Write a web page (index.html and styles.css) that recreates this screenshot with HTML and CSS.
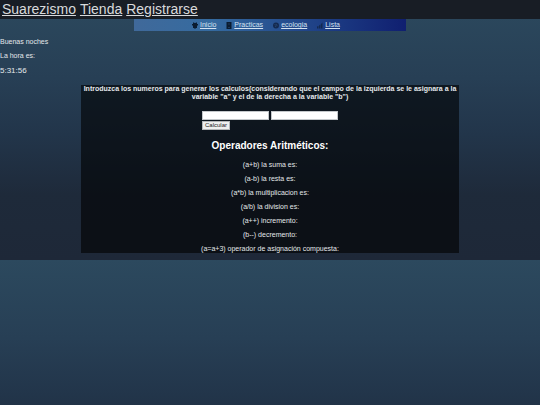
FILE: index.html
```html
<!DOCTYPE html>
<html lang="es">
<head>
  <meta charset="UTF-8">
  <meta name="viewport" content="width=device-width, initial-scale=1.0">
  <title>Operadores</title>
  <link rel="stylesheet" href="styles.css">
</head>
<body>
  <header class="barra">
    <a href="#">Suarezismo</a>
    <a href="#">Tienda</a>
    <a href="#">Registrarse</a>
  </header>

  <nav class="menu">
    <div class="menu-item">
      <svg class="icono" viewBox="0 0 12 14"><path d="M2 1h2l1 1h2l1-1h2v3h2v3h-2v5H8v1H4v-1H2V7H0V4h2z"/></svg>
      <a href="#">Inicio</a>
    </div>
    <div class="menu-item">
      <svg class="icono" viewBox="0 0 12 14"><path d="M1 0h10v14H1z"/><path class="linea" d="M4 4h4M4 11h4"/></svg>
      <a href="#">Practicas</a>
    </div>
    <div class="menu-item">
      <svg class="icono suave" viewBox="0 0 12 14"><circle cx="6" cy="7" r="6"/><path class="linea" d="M3 5l3 1 2-2M5 10V8l4-1"/></svg>
      <a href="#">ecologia</a>
    </div>
    <div class="menu-item">
      <svg class="icono suave" viewBox="0 0 12 14"><path d="M0 9l3-1v5H0zM4 7l3-2v8H4zM8 4l3-3v12H8z"/></svg>
      <a href="#">Lista</a>
    </div>
  </nav>

  <section class="saludo">
    <p>Buenas noches</p>
    <p>La hora es:</p>
    <p class="hora">5:31:56</p>
  </section>

  <main class="panel">
    <h4>Introduzca los numeros para generar los calculos(considerando que el campo de la izquierda se le asignara a la variable "a" y el de la derecha a la variable "b")</h4>
    <form class="formulario">
      <div class="campos">
        <input type="text" id="a" aria-label="a">
        <input type="text" id="b" aria-label="b">
      </div>
      <button type="button">Calcular</button>
    </form>
    <h2>Operadores Aritméticos:</h2>
    <p>(a+b) la suma es:</p>
    <p>(a-b) la resta es:</p>
    <p>(a*b) la multiplicacion es:</p>
    <p>(a/b) la division es:</p>
    <p>(a++) incremento:</p>
    <p>(b--) decremento:</p>
    <p>(a=a+3) operador de asignación compuesta:</p>
  </main>
</body>
</html>
```
FILE: styles.css
```css
* { box-sizing: border-box; }
body {
  margin: 0;
  padding-bottom: 7px;
  font-family: "Liberation Sans", Arial, sans-serif;
  font-size: 7px;
  line-height: 8px;
  color: #e4e8eb;
  background: linear-gradient(#2c495e, #273f55 30%, #22354a 52%, #1e2a3a 75%, #1e2838);
}
a { color: inherit; }
p { margin: 0; }
.barra {
  display: flex;
  gap: 4px;
  padding: 1px 2px;
  background: #181d25;
  color: #d8dadc;
  font-size: 14px;
  line-height: 17px;
}
.menu {
  display: flex;
  justify-content: center;
  gap: 10px;
  width: 50.4%;
  margin: 0 auto;
  padding: 2px 8px 2px 0;
  background: linear-gradient(90deg, #40699a, #356ba0 28%, #1d3e85 70%, #101f70);
  color: #d5e2f0;
}
.menu-item {
  display: flex;
  align-items: center;
  gap: 2px;
}
.icono {
  width: 6px;
  height: 7px;
  fill: #0b1c30;
}
.suave { fill: #142a50; }
.linea {
  fill: none;
  stroke: #31537e;
  stroke-width: 1;
}
.saludo {
  display: flex;
  flex-direction: column;
  gap: 6px;
  padding: 7px 0 9px;
}
.hora {
  font-size: 8px;
  line-height: 10px;
}
.panel {
  width: 70%;
  margin: 0 auto;
  background: rgba(0, 0, 0, 0.6);
  text-align: center;
}
.panel h4 {
  margin: 0;
  font-size: 7px;
}
.formulario {
  display: flex;
  flex-direction: column;
  align-items: flex-start;
  gap: 1px;
  width: fit-content;
  margin: 10px auto;
}
.campos {
  display: flex;
  gap: 2px;
}
.campos input {
  width: 67px;
  height: 9px;
  padding: 0 1px;
  border: 1px solid #c4c8cb;
  background: #fff;
  font: inherit;
}
.formulario button {
  height: 9px;
  padding: 0 2px;
  border: 1px solid #b4b6b8;
  background: #efefef;
  color: #222;
  font-family: inherit;
  font-size: 6px;
  line-height: 7px;
}
.panel h2 {
  margin: 0 0 9px;
  font-size: 10px;
  line-height: 12px;
  color: #fff;
}
.panel p + p { margin-top: 6px; }
```
